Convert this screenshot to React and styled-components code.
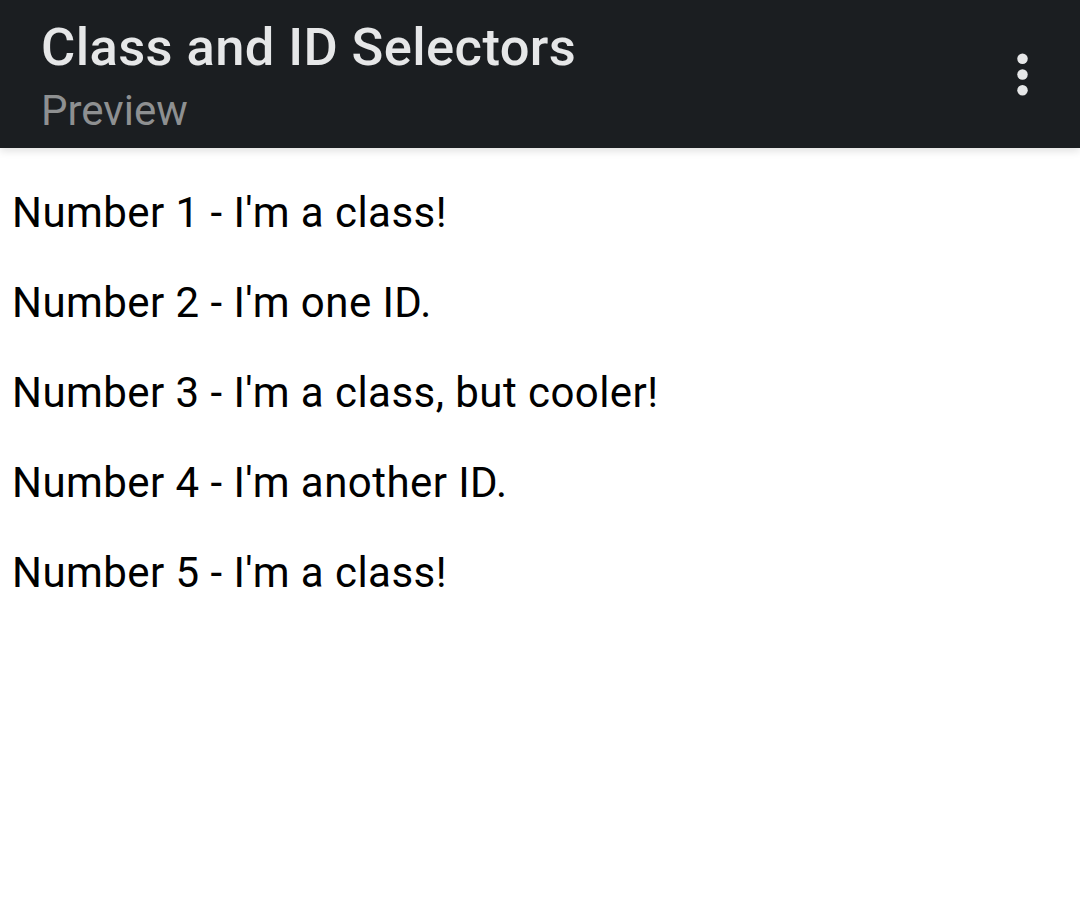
import React from "react";
import styled, { createGlobalStyle } from "styled-components";

const Global = createGlobalStyle`
  html, body { margin: 0; padding: 0; background: #ffffff; }
  body { font-family: Roboto, "Noto Sans", sans-serif; }
`;

const Page = styled.div`
  width: 1080px;
  min-height: 920px;
  background: #ffffff;
  display: flex;
  flex-direction: column;
`;

const Toolbar = styled.header`
  position: relative;
  z-index: 1;
  height: 148px;
  box-sizing: border-box;
  background: #1b1e21;
  display: flex;
  align-items: center;
  justify-content: space-between;
  padding: 0 26px 0 41px;
  box-shadow: 0 3px 8px rgba(0, 0, 0, 0.12);
`;

const Titles = styled.div`
  display: flex;
  flex-direction: column;
  gap: 17px;
  padding-top: 4.5px;
`;

const Title = styled.h1`
  margin: 0;
  font-family: Roboto, sans-serif;
  font-weight: 500;
  font-size: 52.5px;
  line-height: 52.5px;
  letter-spacing: 0.4px;
  color: #e6e7e8;
`;

const Subtitle = styled.div`
  font-family: Roboto, sans-serif;
  font-weight: 400;
  font-size: 42px;
  line-height: 42px;
  color: #8e9091;
`;

const MenuButton = styled.button`
  width: 63px;
  height: 63px;
  padding: 0;
  border: none;
  background: transparent;
  display: flex;
  align-items: center;
  justify-content: center;
  color: #e6e7e8;
`;

const Content = styled.main`
  padding: 41px 12px 0;
  display: flex;
  flex-direction: column;
  gap: 42px;
`;

const Line = styled.p`
  margin: 0;
  font-family: Roboto, sans-serif;
  font-size: 42px;
  line-height: 48px;
  letter-spacing: 0.45px;
  color: #000000;
`;

const items = [
  "Number 1 - I'm a class!",
  "Number 2 - I'm one ID.",
  "Number 3 - I'm a class, but cooler!",
  "Number 4 - I'm another ID.",
  "Number 5 - I'm a class!",
];

export default function App() {
  return (
    <Page>
      <Global />
      <Toolbar>
        <Titles>
          <Title>Class and ID Selectors</Title>
          <Subtitle>Preview</Subtitle>
        </Titles>
        <MenuButton aria-label="More options">
          <svg width="63" height="63" viewBox="0 0 24 24" fill="currentColor">
            <circle cx="12" cy="6" r="2" />
            <circle cx="12" cy="12" r="2" />
            <circle cx="12" cy="18" r="2" />
          </svg>
        </MenuButton>
      </Toolbar>
      <Content>
        {items.map((t) => (
          <Line key={t}>{t}</Line>
        ))}
      </Content>
    </Page>
  );
}
